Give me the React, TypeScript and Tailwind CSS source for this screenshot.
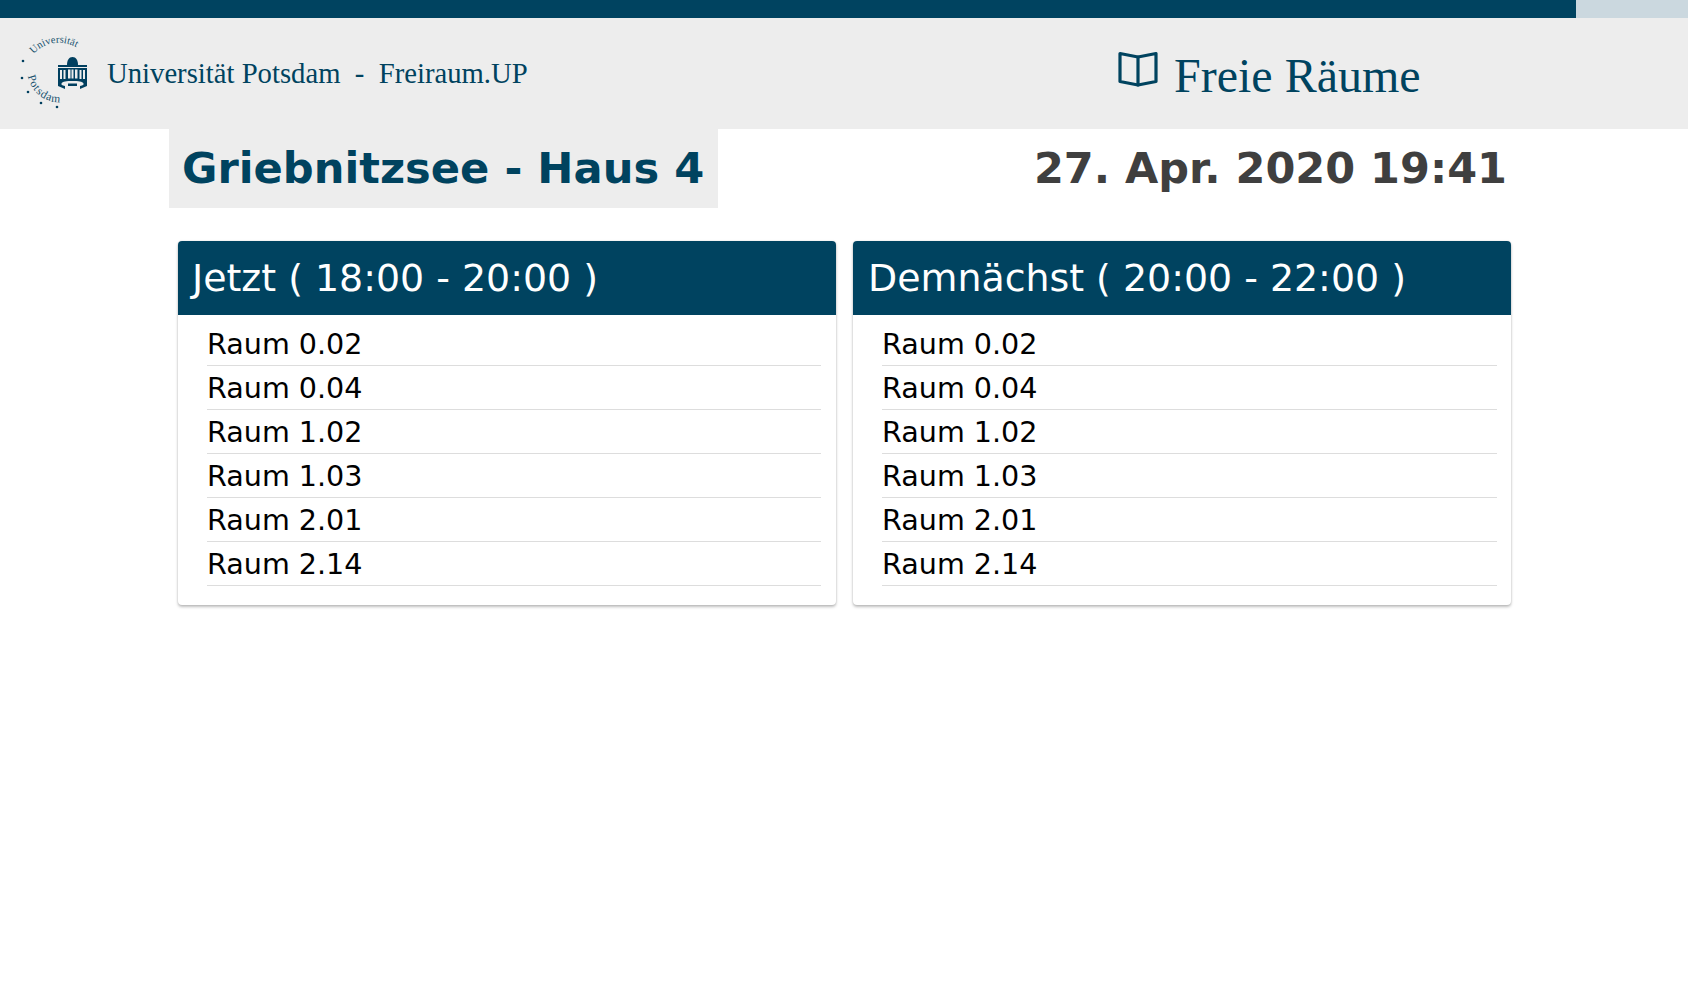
import React from 'react';

const rooms = ['Raum 0.02', 'Raum 0.04', 'Raum 1.02', 'Raum 1.03', 'Raum 2.01', 'Raum 2.14'];

const slots = [
  { title: 'Jetzt ( 18:00 - 20:00 )', pad: 'pl-[14px]', listRight: 'mr-[15px]' },
  { title: 'Demnächst ( 20:00 - 22:00 )', pad: 'pl-[15px]', listRight: 'mr-[14px]' },
];

const Logo = () => (
  <svg width="74" height="80" viewBox="0 0 74 80" className="shrink-0 text-[#003f5f]" fill="currentColor">
    <defs>
      <path id="arcTop" d="M15.500 19 A34 34 0 0 1 70 24" />
      <path id="arcBottom" d="M10 41 A31 31 0 0 0 44 67" />
    </defs>
    <text fontFamily="'Liberation Serif', serif" fontSize="10.500" opacity="0.9">
      <textPath href="#arcTop">Universität</textPath>
    </text>
    <text fontFamily="'Liberation Serif', serif" fontSize="11.500" letterSpacing="0.9" opacity="0.9">
      <textPath href="#arcBottom">Potsdam</textPath>
    </text>
    <circle cx="5" cy="26" r="1.300" />
    <circle cx="4" cy="43" r="1.300" />
    <circle cx="10" cy="57" r="1.300" />
    <circle cx="23" cy="68" r="1.300" />
    <circle cx="39" cy="72" r="1.300" />
    {/* building */}
    <path d="M49 30c0-5 2-8 5.500-8s5.500 3 5.500 8z" />
    <path d="M40 30h29v2h-29z" />
    <path d="M40 33h29v12h-29zM42 35v9h2v-9zM45.500 35v9h2v-9zM50 34.500v9h2.500v-9zM53.500 34.500v9h2v-9zM57 34.500v9h2.500v-9zM61.500 35v9h2v-9zM65 35v9h2v-9z" fillRule="evenodd" />
    <path d="M40 45h29v6l-7 3v-3c3-.5 4-1.500 3.500-2.500-1-2-5-2.500-11-2.500s-10 .5-11 2.500c-.5 1 .5 2 3.500 2.500v3l-7-3z" />
    <path d="M50 48.500h9v2.500h-9z" />
  </svg>
);

const BookIcon = () => (
  <svg width="40" height="36" viewBox="0 0 40 36" fill="none" stroke="#00435f" strokeWidth="3.200" strokeLinejoin="round" strokeLinecap="round" className="shrink-0">
    <path d="M2 2.500L20 6L38 2.500V30.500L20 34L2 30.500Z" />
    <path d="M20 6V34" />
  </svg>
);

export default function App() {
  return (
    <div className="min-h-[982px] bg-white font-['DejaVu_Sans',sans-serif]">
      <div className="flex h-[18px]">
        <div className="w-[1576px] bg-[#004360]" />
        <div className="flex-1 bg-[#cbd8df]" />
      </div>

      <header className="flex h-[111px] bg-[#ededed] font-['Liberation_Serif',serif] text-[#00435f]">
        <div className="flex w-[1118px] items-start pl-[18px] pt-[17px]">
          <Logo />
          <span className="ml-[15px] mt-[18px] whitespace-pre text-[28.700px] leading-[40px]">Universität Potsdam  -  Freiraum.UP</span>
        </div>
        <div className="flex items-start pt-[33px]">
          <BookIcon />
          <span className="ml-[16px] mt-[-3px] text-[48px] leading-[56px]">Freie Räume</span>
        </div>
      </header>

      <div className="ml-[169px] flex w-[1343px] items-start justify-between font-bold">
        <h1 className="h-[79px] bg-[#ededed] pl-[13px] pr-[14px] text-[43.200px] leading-[79px] text-[#00435f]">Griebnitzsee - Haus 4</h1>
        <div className="mr-[5px] text-[43px] leading-[79px] text-[#3f3f3f]">27. Apr. 2020 19:41</div>
      </div>

      <div className="ml-[178px] mt-[33px] flex w-[1333px] gap-[17px]">
        {slots.map(slot => (
          <section key={slot.title} className="h-[364px] flex-1 rounded-[4px] bg-white shadow-[0_2px_3px_rgba(0,0,0,0.25),0_0_2px_rgba(0,0,0,0.12)]">
            <h2 className={`flex h-[74px] items-center rounded-t-[4px] bg-[#004360] pt-[1px] text-[37.900px] text-white ${slot.pad}`}>{slot.title}</h2>
            <ul className={`ml-[29px] mt-[7px] ${slot.listRight}`}>
              {rooms.map(room => (
                <li key={room} className="h-[44px] border-b border-[#dddddd] pt-[1px] text-[28.600px] leading-[43px] text-black">{room}</li>
              ))}
            </ul>
          </section>
        ))}
      </div>
    </div>
  );
}
